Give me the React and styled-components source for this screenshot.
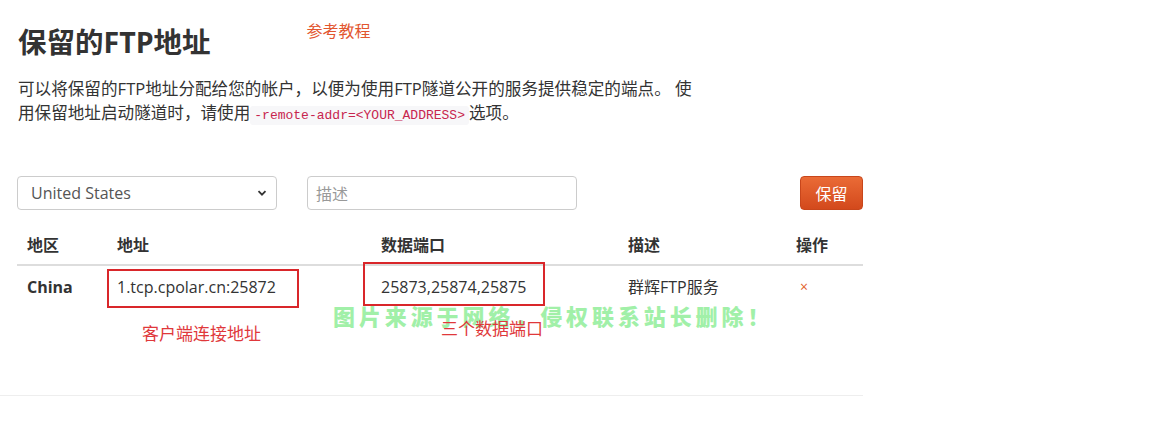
import React from 'react';
import styled, { createGlobalStyle } from 'styled-components';

const GlobalStyle = createGlobalStyle`
  body {
    margin: 0;
    background: #fff;
    font-family: "Open Sans", "Noto Sans CJK SC", sans-serif;
    color: #333;
  }
`;

const cjk = `"Open Sans", "Noto Sans CJK SC", sans-serif`;

const Page = styled.div`
  width: 846px;
  padding: 18px 0 0 17px;
`;

const TitleRow = styled.div`
  display: flex;
  align-items: flex-start;
  gap: 96px;
`;

const Title = styled.h1`
  margin: 6px 0 0 1px;
  font-family: ${cjk};
  font-size: 28.5px;
  line-height: 36px;
  font-weight: 700;
  color: #333;
`;

const TutorialLink = styled.span`
  margin-top: 1px;
  font-family: ${cjk};
  font-size: 16px;
  line-height: 24px;
  color: #e2562f;
`;

const Intro = styled.p`
  width: 686px;
  margin: 17px 0 0 1px;
  font-family: ${cjk};
  font-size: 16.6px;
  line-height: 24px;
  color: #333;
`;

const Code = styled.code`
  padding: 2px 4px;
  background: #f7f7f9;
  border-radius: 3px;
  color: #c7254e;
  font-family: "Liberation Mono", monospace;
  font-size: 13px;
`;

const FormRow = styled.div`
  display: flex;
  align-items: center;
  margin-top: 48px;
  height: 34px;
`;

const SelectBox = styled.div`
  width: 260px;
  height: 34px;
  box-sizing: border-box;
  border: 1px solid #ccc;
  border-radius: 4px;
  display: flex;
  align-items: center;
  padding: 0 13px;
  font-family: ${cjk};
  font-size: 16px;
  color: #555;
`;

const Chevron = styled.svg`
  margin-left: auto;
  margin-right: -4px;
`;

const TextInput = styled.div`
  margin-left: 30px;
  width: 270px;
  height: 34px;
  box-sizing: border-box;
  border: 1px solid #ccc;
  border-radius: 4px;
  display: flex;
  align-items: center;
  padding: 0 8px;
  font-family: ${cjk};
  font-size: 16px;
  color: #999;
`;

const SaveButton = styled.button`
  margin-left: auto;
  width: 63px;
  height: 34px;
  border: 1px solid #c8461b;
  border-radius: 4px;
  background: linear-gradient(#ea6b36, #d3491c);
  color: #fff;
  font-family: ${cjk};
  font-size: 16px;
  padding: 0;
`;

const TableWrap = styled.div`
  position: relative;
  margin-top: 16px;
`;

const Table = styled.table`
  width: 846px;
  border-collapse: collapse;
  table-layout: fixed;
  font-family: ${cjk};
  font-size: 16px;
`;

const Th = styled.th`
  text-align: left;
  font-weight: 700;
  padding: 8px 10px;
  height: 38px;
  box-sizing: border-box;
  line-height: 22px;
  border-bottom: 2px solid #ddd;
  color: #333;
`;

const Td = styled.td`
  position: relative;
  padding: 10px 10px;
  line-height: 20px;
  height: 40px;
  box-sizing: border-box;
  font-weight: ${(p) => (p.$bold ? 700 : 400)};
  color: #333;
`;

const RemoveMark = styled.span`
  color: #e2602c;
  font-size: 14px;
  padding-left: 4px;
`;

const RedBox = styled.div`
  position: absolute;
  border: 2px solid #d9262a;
  box-sizing: border-box;
  pointer-events: none;
`;

const Note = styled.span`
  position: absolute;
  font-family: ${cjk};
  font-size: 17px;
  line-height: 20px;
  color: #e0383b;
  white-space: nowrap;
`;

const Watermark = styled.span`
  position: absolute;
  font-family: ${cjk};
  font-size: 22px;
  line-height: 26px;
  font-weight: 900;
  letter-spacing: 3.9px;
  color: rgba(130, 235, 140, 0.75);
  white-space: nowrap;
`;

const Divider = styled.hr`
  margin: 88px 0 0 -17px;
  width: 863px;
  border: 0;
  border-top: 1px solid #eee;
`;

const App = () => (
  <>
    <GlobalStyle />
    <Page>
      <TitleRow>
        <Title>保留的FTP地址</Title>
        <TutorialLink>参考教程</TutorialLink>
      </TitleRow>
      <Intro>
        可以将保留的FTP地址分配给您的帐户，以便为使用FTP隧道公开的服务提供稳定的端点。 使用保留地址启动隧道时，请使用
        <Code>-remote-addr=&lt;YOUR_ADDRESS&gt;</Code>选项。
      </Intro>
      <FormRow>
        <SelectBox>
          United States
          <Chevron width="10" height="10" viewBox="0 0 10 10">
            <path d="M1.5 3.2 L5 6.7 L8.5 3.2" fill="none" stroke="#333" strokeWidth="1.8" />
          </Chevron>
        </SelectBox>
        <TextInput>描述</TextInput>
        <SaveButton>保留</SaveButton>
      </FormRow>
      <TableWrap>
        <Table>
          <colgroup>
            <col style={{ width: 90 }} />
            <col style={{ width: 264 }} />
            <col style={{ width: 247 }} />
            <col style={{ width: 168 }} />
            <col style={{ width: 77 }} />
          </colgroup>
          <thead>
            <tr>
              <Th>地区</Th>
              <Th>地址</Th>
              <Th>数据端口</Th>
              <Th>描述</Th>
              <Th>操作</Th>
            </tr>
          </thead>
          <tbody>
            <tr>
              <Td $bold>China</Td>
              <Td>
                1.tcp.cpolar.cn:25872
                <RedBox style={{ left: 0, top: 3, width: 192, height: 39 }} />
              </Td>
              <Td>
                25873,25874,25875
                <RedBox style={{ left: -8, top: -4, width: 182, height: 44 }} />
              </Td>
              <Td>群辉FTP服务</Td>
              <Td>
                <RemoveMark>×</RemoveMark>
              </Td>
            </tr>
          </tbody>
        </Table>
        <Watermark style={{ left: 316, top: 77 }}>图片来源于网络，侵权联系站长删除！</Watermark>
        <Note style={{ left: 125, top: 98 }}>客户端连接地址</Note>
        <Note style={{ left: 424, top: 93 }}>三个数据端口</Note>
      </TableWrap>
      <Divider />
    </Page>
  </>
);

export default App;
